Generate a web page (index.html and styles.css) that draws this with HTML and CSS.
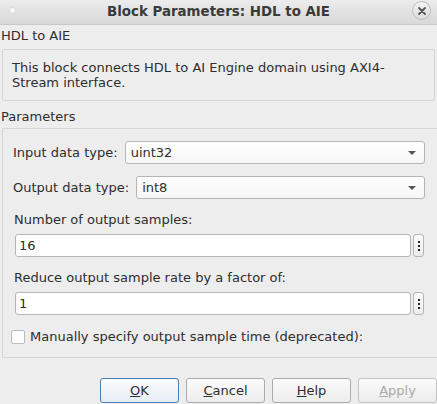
FILE: index.html
```html
<!DOCTYPE html>
<html>
<head>
<meta charset="utf-8">
<link rel="stylesheet" href="styles.css">
</head>
<body>
<div class="window">
  <div class="titlebar">
    <span class="dot"></span>
    <span class="title">Block Parameters: HDL to AIE</span>
    <span class="close">
      <svg width="10" height="10" viewBox="0 0 10 10"><path d="M2 2 L8 8 M8 2 L2 8" stroke="#555" stroke-width="1.8" stroke-linecap="round"/></svg>
    </span>
  </div>
  <div class="content">
    <div class="group-label">HDL to AIE</div>
    <div class="desc">This block connects HDL to AI Engine domain using AXI4-<br>Stream interface.</div>
    <div class="group-label params-label">Parameters</div>
    <div class="params">
      <div class="row">
        <span class="lbl">Input data type:</span>
        <div class="select"><span>uint32</span><span class="arrow"></span></div>
      </div>
      <div class="row">
        <span class="lbl">Output data type:</span>
        <div class="select"><span>int8</span><span class="arrow"></span></div>
      </div>
      <div class="field-label">Number of output samples:</div>
      <div class="edit-row">
        <div class="edit">16</div>
        <div class="more"><i></i><i></i><i></i></div>
      </div>
      <div class="field-label">Reduce output sample rate by a factor of:</div>
      <div class="edit-row">
        <div class="edit">1</div>
        <div class="more"><i></i><i></i><i></i></div>
      </div>
      <div class="check-row">
        <span class="checkbox"></span>
        <span>Manually specify output sample time (deprecated):</span>
      </div>
    </div>
    <div class="buttons">
      <div class="btn default"><u>O</u>K</div>
      <div class="btn"><u>C</u>ancel</div>
      <div class="btn"><u>H</u>elp</div>
      <div class="btn disabled"><u>A</u>pply</div>
    </div>
  </div>
</div>
</body>
</html>
```
FILE: styles.css
```css
* { box-sizing: border-box; }
html, body { margin: 0; padding: 0; }
body {
  width: 437px;
  height: 404px;
  overflow: hidden;
  background: #ededed;
  font-family: "DejaVu Sans", sans-serif;
  font-size: 13px;
  line-height: 16px;
  color: #2e2e2e;
}
.window { width: 437px; height: 404px; display: flex; flex-direction: column; }
.titlebar {
  height: 25px;
  flex: none;
  display: flex;
  align-items: center;
  justify-content: center;
  position: relative;
  background: linear-gradient(#ececec, #d8d8d8);
  border-bottom: 1px solid #c9c9c9;
}
.title { font-weight: bold; font-size: 13.4px; color: #3a3a3a; margin-top: -1px; }
.dot {
  position: absolute; left: 9px; top: 7px;
  width: 7px; height: 7px; border-radius: 50%;
  background: #fafafa; border: 1px solid #d6d6d6;
}
.close {
  position: absolute; right: 6px; top: 1px;
  width: 19px; height: 19px; border-radius: 50%;
  background: linear-gradient(#f2f2f2, #dcdcdc);
  border: 1px solid #bdbdbd;
  display: flex; align-items: center; justify-content: center;
}
.content { flex: 1; display: flex; flex-direction: column; padding: 0 0 0 2px; }
.group-label { height: 24px; padding-top: 3px; margin-left: -1px; }
.desc {
  height: 52px;
  margin-right: 2px;
  border: 1px solid #d6d6d6;
  border-radius: 2px;
  padding: 10px 9px 0;
  line-height: 15px;
}
.params-label { height: 27px; padding-top: 8px; }
.params {
  height: 230px;
  border: 1px solid #d6d6d6;
  border-right: none;
  border-radius: 2px 0 0 2px;
  padding: 12px 12px 0 10px;
  display: flex;
  flex-direction: column;
}
.row { display: flex; align-items: center; height: 23px; margin-bottom: 12px; flex: none; }
.lbl { margin-right: 7px; }
.select {
  flex: 1;
  height: 23px;
  border: 1px solid #b5b5b5;
  border-radius: 3px;
  background: linear-gradient(#ffffff, #f6f6f6);
  display: flex; align-items: center; justify-content: space-between;
  padding: 0 8px 0 5px;
}
.arrow {
  width: 0; height: 0;
  border-left: 4px solid transparent;
  border-right: 4px solid transparent;
  border-top: 4px solid #555;
}
.field-label { height: 23px; line-height: 18px; padding-left: 1px; flex: none; }
.edit-row { display: flex; height: 23px; margin-bottom: 12px; flex: none; }
.edit {
  flex: 1;
  border: 1px solid #b5b5b5;
  border-radius: 3px;
  background: #fff;
  margin-left: 2px;
  padding-left: 3px;
  display: flex; align-items: center;
}
.more {
  width: 11px; margin-left: 2px; margin-right: 1px;
  border: 1px solid #b5b5b5;
  border-radius: 3px;
  background: linear-gradient(#fbfbfb, #ececec);
  display: flex; flex-direction: column; align-items: center; justify-content: center; gap: 2px;
}
.more i { display: block; width: 2px; height: 2px; background: #222; }
.check-row { display: flex; align-items: center; height: 20px; margin-left: -2px; flex: none; }
.checkbox {
  width: 14px; height: 14px; margin-right: 5px;
  border: 1px solid #bcbcbc; border-radius: 2px; background: #fdfdfd;
}
.buttons {
  display: flex; gap: 7px; margin-top: 20px; padding-left: 98px;
}
.btn {
  flex: none;
  width: 79px; height: 25px;
  border: 1px solid #ababab;
  border-radius: 3px;
  background: linear-gradient(#fbfbfb, #ececec);
  display: flex; align-items: center; justify-content: center;
  color: #2e2e2e;
}
.btn u { text-decoration: underline; }
.btn.default { border-color: #4f7fae; background: linear-gradient(#fafcfe, #e6edf5); }
.btn.disabled { color: #a9a9a9; border-color: #c3c3c3; }
```
